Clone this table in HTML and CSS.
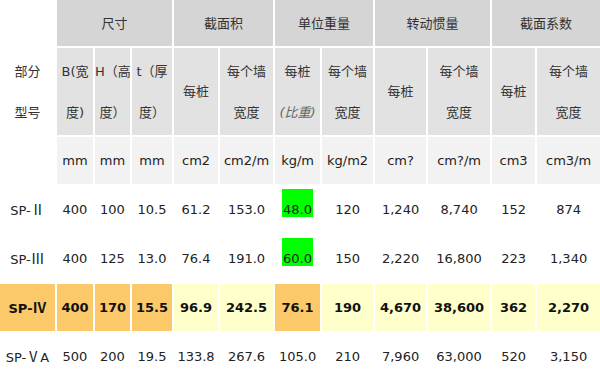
FILE: index.html
```html
<!DOCTYPE html>
<html lang="zh">
<head>
<meta charset="utf-8">
<title>钢板桩规格</title>
<link rel="stylesheet" href="styles.css">
</head>
<body>
<table class="spec">
  <colgroup>
    <col class="c0"><col class="cb"><col class="ch"><col class="ct"><col class="c1"><col class="c2"><col class="c3"><col class="c4"><col class="c5"><col class="c6"><col class="c7"><col class="c8">
  </colgroup>
  <tr class="group">
    <td class="blank"></td>
    <td colspan="3">尺寸</td>
    <td colspan="2">截面积</td>
    <td colspan="2">单位重量</td>
    <td colspan="2">转动惯量</td>
    <td colspan="2">截面系数</td>
  </tr>
  <tr class="sub">
    <td class="blank">部分<br>型号</td>
    <td>B(宽<br>度)</td>
    <td>H（高<br>度）</td>
    <td>t（厚<br>度）</td>
    <td>每桩</td>
    <td>每个墙<br>宽度</td>
    <td>每桩<br><span class="note">(比重)</span></td>
    <td>每个墙<br>宽度</td>
    <td>每桩</td>
    <td>每个墙<br>宽度</td>
    <td>每桩</td>
    <td>每个墙<br>宽度</td>
  </tr>
  <tr class="units">
    <td class="blank"></td>
    <td>mm</td><td>mm</td><td>mm</td>
    <td>cm2</td><td>cm2/m</td>
    <td>kg/m</td><td>kg/m2</td>
    <td>cm?</td><td>cm?/m</td>
    <td>cm3</td><td>cm3/m</td>
  </tr>
  <tr class="row">
    <td>SP-<span class="rn">Ⅱ</span></td>
    <td>400</td><td>100</td><td>10.5</td>
    <td>61.2</td><td>153.0</td>
    <td><span class="mark">48.0</span></td><td>120</td>
    <td>1,240</td><td>8,740</td>
    <td>152</td><td>874</td>
  </tr>
  <tr class="row">
    <td>SP-<span class="rn">Ⅲ</span></td>
    <td>400</td><td>125</td><td>13.0</td>
    <td>76.4</td><td>191.0</td>
    <td><span class="mark">60.0</span></td><td>150</td>
    <td>2,220</td><td>16,800</td>
    <td>223</td><td>1,340</td>
  </tr>
  <tr class="row hl">
    <td class="or">SP-<span class="rn">Ⅳ</span></td>
    <td class="or">400</td><td class="or">170</td><td class="or">15.5</td>
    <td class="ye">96.9</td><td class="ye">242.5</td>
    <td class="or">76.1</td><td class="ye">190</td>
    <td class="ye">4,670</td><td class="ye">38,600</td>
    <td class="ye">362</td><td class="ye">2,270</td>
  </tr>
  <tr class="row">
    <td>SP-<span class="rn">Ⅴ</span>A</td>
    <td>500</td><td>200</td><td>19.5</td>
    <td>133.8</td><td>267.6</td>
    <td>105.0</td><td>210</td>
    <td>7,960</td><td>63,000</td>
    <td>520</td><td>3,150</td>
  </tr>
</table>
</body>
</html>
```

FILE: styles.css
```css
html, body {
  margin: 0;
  padding: 0;
  background: #ffffff;
  overflow: hidden;
}

.spec {
  table-layout: fixed;
  width: 604px;
  border-collapse: separate;
  border-spacing: 2px;
  margin: -2px 0 0 -2px;
  font-family: "DejaVu Sans", "Noto Sans CJK SC", sans-serif;
  font-size: 13px;
  color: #222;
}

.c0 { width: 55px; }
.cb { width: 36px; }
.ch { width: 35px; }
.ct { width: 40px; }
.c1 { width: 44px; }
.c2 { width: 53px; }
.c3 { width: 45px; }
.c4 { width: 51px; }
.c5 { width: 51px; }
.c6 { width: 62px; }
.c7 { width: 43px; }
.c8 { width: 63px; }

.spec td {
  padding: 0;
  text-align: center;
  vertical-align: middle;
  white-space: nowrap;
  line-height: 16px;
}

.group td {
  height: 46px;
  background: #d5d5d5;
  color: #333;
  font-family: "Noto Sans CJK SC", sans-serif;
}

.sub td {
  height: 87px;
  background: #e2e2e2;
  color: #333;
  line-height: 41px;
}

.units td {
  height: 47px;
  background: #f2f2f2;
}

.spec .blank {
  background: #ffffff;
}

.row td {
  height: 47px;
}

.rn {
  font-family: "Noto Sans CJK SC", sans-serif;
  font-weight: normal;
  font-size: 14px;
}

.hl .rn {
  font-weight: bold;
}

.note {
  font-style: italic;
  color: #666;
}

.mark {
  display: inline-block;
  background: #00ff00;
  line-height: 14px;
  padding: 14px 1px 0;
  margin-top: -14px;
}

.hl td {
  font-weight: bold;
  color: #111;
}

.spec .or {
  background: #fcc96a;
}

.spec .ye {
  background: #ffffcc;
}
```
